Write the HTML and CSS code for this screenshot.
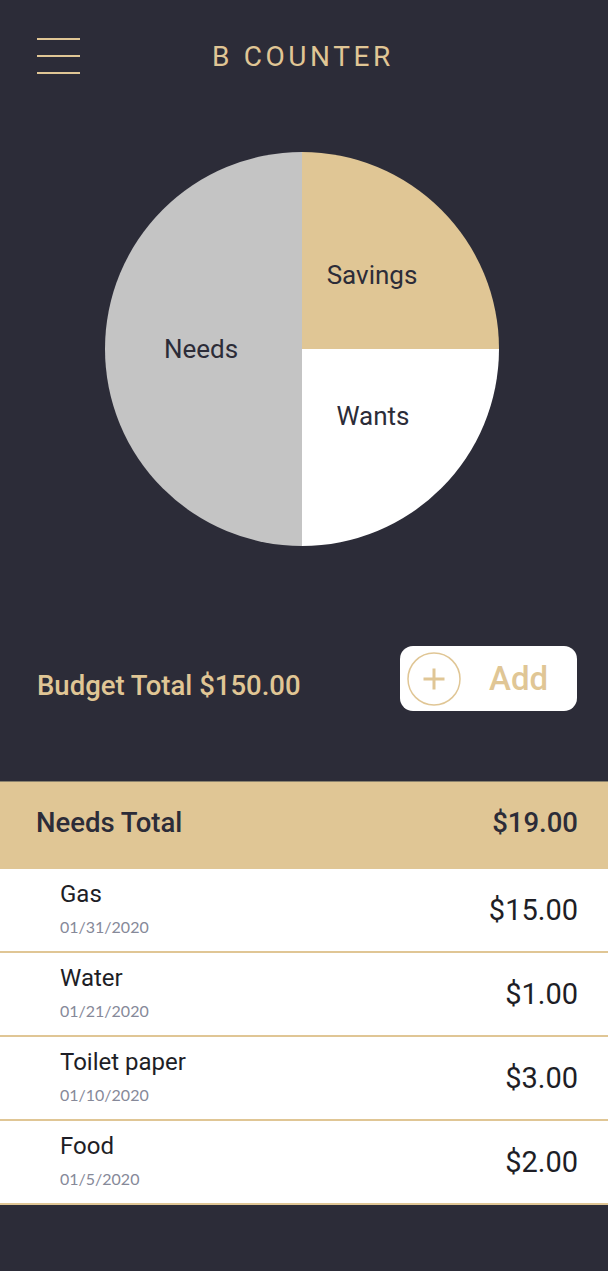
FILE: index.html
```html
<!DOCTYPE html>
<html>
<head>
<meta charset="utf-8">
<link rel="stylesheet" href="styles.css">
</head>
<body>
<div class="app">
  <header class="header">
    <div class="menu"><span></span><span></span><span></span></div>
    <h1 class="title">B COUNTER</h1>
    <div></div>
  </header>
  <section class="chart">
    <svg class="pie" width="394" height="394" viewBox="0 0 394 394">
      <path d="M197 197 L197 0 A197 197 0 0 0 197 394 Z" fill="#c4c4c4"/>
      <path d="M197 197 L197 0 A197 197 0 0 1 394 197 Z" fill="#e0c695"/>
      <path d="M197 197 L394 197 A197 197 0 0 1 197 394 Z" fill="#ffffff"/>
      <text x="96" y="206" class="pie-label" text-anchor="middle">Needs</text>
      <text x="267" y="132" class="pie-label" text-anchor="middle">Savings</text>
      <text x="268" y="273" class="pie-label" text-anchor="middle">Wants</text>
    </svg>
  </section>
  <section class="budget">
    <div class="budget-total">Budget Total $150.00</div>
    <button class="add-btn">
      <span class="plus">
        <svg width="54" height="54" viewBox="0 0 54 54"><circle cx="27" cy="27" r="26" fill="none" stroke="#e0c695" stroke-width="1.5"/><path d="M27 16.5 V37.5 M16.5 27 H37.5" stroke="#e0c695" stroke-width="3"/></svg>
      </span>
      <span class="add-text">Add</span>
    </button>
  </section>
  <section class="list">
    <div class="list-head"><span>Needs Total</span><span>$19.00</span></div>
    <div class="item"><div class="item-info"><div class="item-name">Gas</div><div class="item-date">01/31/2020</div></div><div class="item-amt">$15.00</div></div>
    <div class="item"><div class="item-info"><div class="item-name">Water</div><div class="item-date">01/21/2020</div></div><div class="item-amt">$1.00</div></div>
    <div class="item"><div class="item-info"><div class="item-name">Toilet paper</div><div class="item-date">01/10/2020</div></div><div class="item-amt">$3.00</div></div>
    <div class="item"><div class="item-info"><div class="item-name">Food</div><div class="item-date">01/5/2020</div></div><div class="item-amt">$2.00</div></div>
  </section>
</div>
</body>
</html>
```
FILE: styles.css
```css
* { box-sizing: border-box; }
html, body { margin: 0; padding: 0; }
body {
  background: #2c2c38;
  font-family: Roboto, "Liberation Sans", sans-serif;
  width: 608px;
  min-height: 1271px;
}
.app { display: flex; flex-direction: column; }
.header {
  height: 112px;
  display: grid;
  grid-template-columns: 1fr auto 1fr;
  align-items: center;
  padding: 0 37px;
}
.menu { display: flex; flex-direction: column; gap: 15px; width: 43px; }
.menu span { display: block; height: 2px; background: #e0c695; }
.title {
  margin: 0 0 0 -2px;
  font-weight: 400;
  font-size: 28px;
  letter-spacing: 3.6px;
  color: #e0c695;
}
.chart { display: flex; justify-content: center; padding-top: 40px; padding-right: 4px; }
.pie { display: block; }
.pie-label { font-family: Roboto, "Liberation Sans", sans-serif; font-size: 26px; fill: #2c2c38; }
.budget {
  margin-top: 100px;
  height: 65px;
  display: flex;
  justify-content: space-between;
  align-items: center;
  padding: 0 31px 0 37px;
}
.budget-total { font-size: 27.5px; font-weight: 500; color: #e0c695; padding-top: 14px; }
.add-btn {
  width: 177px;
  height: 65px;
  background: #fff;
  border: none;
  border-radius: 13px;
  display: flex;
  align-items: center;
  padding: 0 0 0 7px;
  font-family: inherit;
}
.plus { display: block; width: 54px; height: 54px; }
.plus svg { display: block; }
.add-text { font-size: 33px; font-weight: 500; color: #e0c695; margin-left: 28px; }
.list { margin-top: 70px; }
.list-head {
  height: 88px;
  background: #e0c695;
  border-top: 1px solid #8a826e;
  display: flex;
  justify-content: space-between;
  align-items: center;
  padding: 0 30px 6px 36px;
  font-size: 27.5px;
  font-weight: 500;
  color: #2c2c38;
}
.item {
  height: 84px;
  background: #fff;
  border-bottom: 2px solid #e0c695;
  display: flex;
  justify-content: space-between;
  align-items: center;
  padding: 0 30px 0 60px;
}
.item-info { display: flex; flex-direction: column; gap: 10px; margin-top: -2px; }
.item-name { font-size: 24px; line-height: 26px; color: #1e1e26; }
.item-date { font-family: Lato, "Noto Sans", sans-serif; font-size: 16px; line-height: 20px; color: #868999; }
.item-amt { font-size: 29px; color: #1e1e26; }
```
